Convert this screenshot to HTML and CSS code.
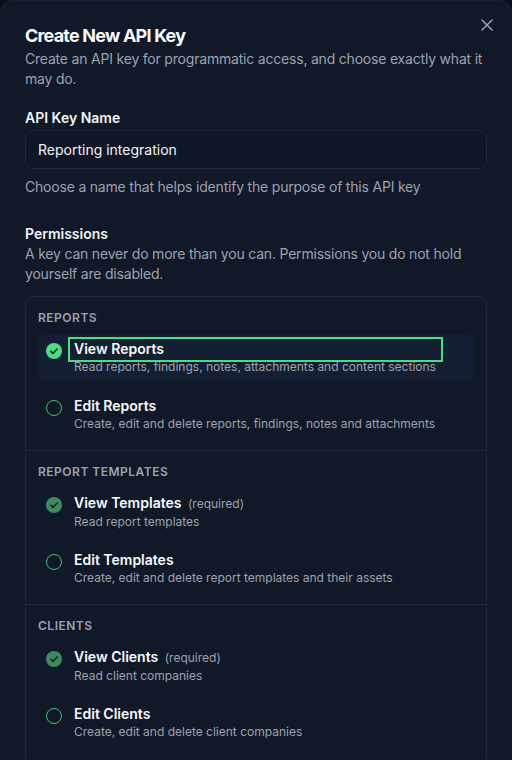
FILE: index.html
```html
<!DOCTYPE html>
<html lang="en">
<head>
<meta charset="utf-8">
<title>Create New API Key</title>
<link rel="stylesheet" href="styles.css">
</head>
<body>
<div class="modal">
  <button class="close" aria-label="Close">
    <svg width="12" height="12" viewBox="0 0 12 12" fill="none" stroke="currentColor" stroke-width="1.5" stroke-linecap="round"><path d="M1 1L11 11M11 1L1 11"/></svg>
  </button>
  <h1 class="title">Create New API Key</h1>
  <p class="muted">Create an API key for programmatic access, and choose exactly what it may do.</p>

  <div class="field">
    <label class="label">API Key Name</label>
    <div class="input">Reporting integration</div>
    <p class="muted help">Choose a name that helps identify the purpose of this API key</p>
  </div>

  <div class="field perms">
    <div class="label">Permissions</div>
    <p class="muted">A key can never do more than you can. Permissions you do not hold yourself are disabled.</p>
  </div>

  <div class="box">
    <div class="section">
      <div class="sec-head">Reports</div>
      <div class="rows">
        <div class="row active">
          <span class="ico on"><svg viewBox="0 0 16 16"><circle cx="8" cy="8" r="8" fill="#4ade80"/><path d="M4.8 8.3l2.1 2.1 4.3-4.4" fill="none" stroke="#111827" stroke-width="1.5" stroke-linecap="round" stroke-linejoin="round"/></svg></span>
          <div class="text">
            <div class="name focus">View Reports</div>
            <div class="desc">Read reports, findings, notes, attachments and content sections</div>
          </div>
        </div>
        <div class="row">
          <span class="ico off"></span>
          <div class="text">
            <div class="name">Edit Reports</div>
            <div class="desc">Create, edit and delete reports, findings, notes and attachments</div>
          </div>
        </div>
      </div>
    </div>
    <div class="section">
      <div class="sec-head">Report Templates</div>
      <div class="rows">
        <div class="row">
          <span class="ico"><svg viewBox="0 0 16 16"><circle cx="8" cy="8" r="8" fill="#3d8a61"/><path d="M4.8 8.3l2.1 2.1 4.3-4.4" fill="none" stroke="#111827" stroke-width="1.5" stroke-linecap="round" stroke-linejoin="round"/></svg></span>
          <div class="text">
            <div class="name">View Templates <span class="req">(required)</span></div>
            <div class="desc">Read report templates</div>
          </div>
        </div>
        <div class="row">
          <span class="ico off"></span>
          <div class="text">
            <div class="name">Edit Templates</div>
            <div class="desc">Create, edit and delete report templates and their assets</div>
          </div>
        </div>
      </div>
    </div>
    <div class="section">
      <div class="sec-head">Clients</div>
      <div class="rows">
        <div class="row">
          <span class="ico"><svg viewBox="0 0 16 16"><circle cx="8" cy="8" r="8" fill="#3d8a61"/><path d="M4.8 8.3l2.1 2.1 4.3-4.4" fill="none" stroke="#111827" stroke-width="1.5" stroke-linecap="round" stroke-linejoin="round"/></svg></span>
          <div class="text">
            <div class="name">View Clients <span class="req">(required)</span></div>
            <div class="desc">Read client companies</div>
          </div>
        </div>
        <div class="row">
          <span class="ico off"></span>
          <div class="text">
            <div class="name">Edit Clients</div>
            <div class="desc">Create, edit and delete client companies</div>
          </div>
        </div>
      </div>
    </div>
  </div>
</div>
</body>
</html>
```
FILE: styles.css
```css
* { box-sizing: border-box; }
html, body { margin: 0; padding: 0; }
body {
  background: #0a0d14;
  font-family: Inter, "Noto Sans", sans-serif;
  color: #f3f4f6;
  height: 760px;
  overflow: hidden;
}
.modal {
  position: relative;
  background: #111827;
  border-radius: 12px 12px 0 0;
  width: 512px;
  min-height: 760px;
  padding: 21px 25px 0 25px;
  border-top: 1px solid #1a2232;
}
.close {
  position: absolute;
  top: 18px;
  right: 19px;
  background: none;
  border: 0;
  padding: 0;
  color: #9ca3af;
  width: 12px;
  height: 12px;
  display: flex;
}
.title {
  margin: 0;
  font-size: 18px;
  line-height: 27px;
  font-weight: 700;
  color: #f9fafb;
  letter-spacing: -0.8px;
}
.muted {
  margin: 0;
  font-size: 14px;
  line-height: 20px;
  color: #9ca3af;
  letter-spacing: -0.2px;
}
.field { margin-top: 19px; }
.label {
  display: block;
  font-size: 14px;
  line-height: 20px;
  font-weight: 600;
  color: #f3f4f6;
}
.input {
  margin-top: 2px;
  height: 39px;
  border: 1px solid #1e293b;
  border-radius: 8px;
  background: #0f1626;
  padding: 0 12px;
  display: flex;
  align-items: center;
  font-size: 14px;
  color: #f3f4f6;
}
.help { margin-top: 8px; }
.perms { margin-top: 27px; }
.box {
  margin-top: 12px;
  border: 1px solid #1e293b;
  border-radius: 9px;
}
.section {
  padding: 13px 12px 12px 12px;
}
.section:last-child { padding-bottom: 20px; }
.section + .section { border-top: 1px solid #1e293b; }
.sec-head {
  font-size: 12px;
  line-height: 16px;
  font-weight: 600;
  text-transform: uppercase;
  letter-spacing: 0.5px;
  color: #9ca3af;
}
.rows {
  margin-top: 8px;
  display: flex;
  flex-direction: column;
  gap: 10px;
}
.row {
  display: flex;
  gap: 12px;
  align-items: flex-start;
  height: 47px;
  padding: 5px 8px;
  border-radius: 8px;
}
.row.active { background: #151f34; }
.ico {
  width: 16px;
  height: 16px;
  margin-top: 4px;
  flex: none;
  display: block;
}
.ico svg { width: 16px; height: 16px; display: block; }
.ico.off {
  border: 1.5px solid #4ade80;
  border-radius: 50%;
  opacity: 0.85;
}
.text { flex: 1; min-width: 0; }
.name {
  font-size: 14px;
  line-height: 20px;
  font-weight: 600;
  color: #f9fafb;
}
.name.focus { position: relative; }
.name.focus::after {
  content: "";
  position: absolute;
  left: -6px;
  right: 23px;
  top: -2px;
  bottom: -3px;
  border: 2px solid #4ade80;
}
.req {
  font-size: 12px;
  font-weight: 400;
  color: #9ca3af;
  margin-left: 3px;
}
.desc {
  font-size: 12px;
  line-height: 16px;
  color: #9ca3af;
}
```
